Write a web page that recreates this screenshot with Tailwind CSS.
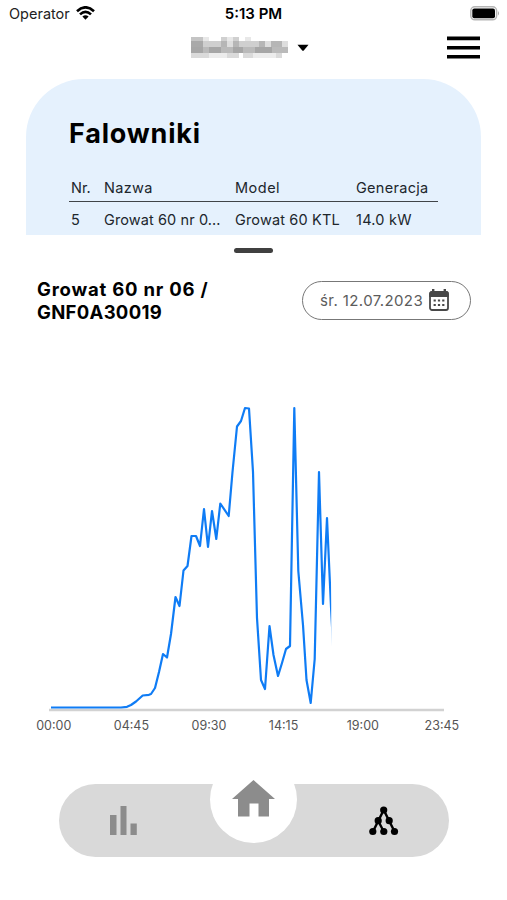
<!DOCTYPE html>
<html lang="pl">
<head>
<meta charset="utf-8">
<title>Falowniki</title>
<script src="https://cdn.jsdelivr.net/npm/@tailwindcss/browser@4"></script>
</head>
<body class="bg-white">
<div class="w-[507px] h-[900px] flex flex-col overflow-hidden bg-white font-['Inter',sans-serif] text-[#20262c]">
  <div class="h-7 shrink-0 grid grid-cols-3 items-center pl-[9px] pr-[7px] text-[14.5px] leading-7 text-[#222]">
    <div class="flex items-center gap-[6px]"><span>Operator</span>
      <svg class="w-[19px] h-[14px] mt-[-2px]" viewBox="0 0 19 14"><g fill="none" stroke="#000" stroke-width="2.6"><path d="M1 5.2Q9.5-2.6 18 5.2"/><path d="M4 8.4Q9.5 3.2 15 8.4"/></g><path d="M6.4 10.6Q9.5 8 12.6 10.6L9.5 13.8Z"/></svg>
    </div>
    <div class="text-center font-semibold text-[15px] text-black pr-[2px]">5:13 PM</div>
    <svg class="justify-self-end w-[30px] h-[15px] mt-[-2px]" viewBox="0 0 30 15"><rect x=".8" y=".8" width="25.8" height="13" rx="4" fill="#fff" stroke="#b5b5b5" stroke-width="1.5"/><rect x="2.3" y="2.5" width="22.7" height="9.7" rx="2"/><path d="M28 5q2 2.3 0 4.6z" fill="#aaa"/></svg>
  </div>
  <div class="h-[51px] shrink-0 flex pl-[191px] pt-[8px]">
    <svg class="w-[97px] h-[24px]" viewBox="0 0 97 24" shape-rendering="crispEdges">
      <path fill="#c4c4c4" d="M0 1h12v4H0z"/><path fill="#e8e8e8" d="M12 1h6v4h-6zM36 1h6v4h-6zM54 1h6v4h-6z"/><path fill="#d0d0d0" d="M30 1h6v4h-6zM42 1h6v4h-6z"/>
      <path fill="#a9a9a9" d="M0 5h12v6H0z"/><path fill="#cfcfcf" d="M12 5h18v6H12zM48 5h20v6H48z"/><path fill="#b6b6b6" d="M30 5h6v6h-6zM42 5h6v6h-6zM68 5h6v6h-6zM80 5h11v6H80z"/><path fill="#dedede" d="M36 5h6v6h-6zM74 5h6v6h-6zM91 5h6v6h-6z"/>
      <path fill="#a6a6a6" d="M0 11h12v6H0zM18 11h12v6H18zM42 11h10v6H42zM64 11h17v6H64z"/><path fill="#bababa" d="M12 11h6v6h-6zM30 11h12v6H30zM52 11h12v6H52zM81 11h16v6H81z"/>
      <path fill="#dadada" d="M0 17h18v5H0zM36 17h12v5H36zM52 17h10v5H52zM85 17h6v5h-6z"/><path fill="#ececec" d="M18 17h18v5H18zM62 17h23v5H62z"/>
    </svg>
    <svg class="ml-[9px] mt-[8px] w-[12px] h-[8px]" viewBox="0 0 12 8"><path d="M.5.8h11L7 6.2Q6 7.2 5 6.2Z"/></svg>
    <svg class="ml-[138px] w-[33px] h-[24px]" viewBox="0 0 33 24"><path d="M0 2.4h33M0 11.7h33M0 20.7h33" stroke="#000" stroke-width="3.6"/></svg>
  </div>
  <section class="h-[156px] shrink-0 mx-[26px] rounded-t-[58px] bg-[#e5f1fd] pl-[43px] pr-[43px] pt-[39px] overflow-hidden">
    <h1 class="text-[27px] leading-[32px] font-bold text-black tracking-[0.8px]">Falowniki</h1>
    <div class="mt-[26px] h-[26px] flex border-b border-[#404448] text-[14.5px] leading-[24px] pl-[2px] whitespace-nowrap">
      <div class="w-[33px]">Nr.</div><div class="w-[131px] tracking-[0.3px]">Nazwa</div><div class="w-[121px] tracking-[0.5px]">Model</div><div class="tracking-[0.3px]">Generacja</div>
    </div>
    <div class="mt-[6px] flex text-[14.5px] leading-[24px] pl-[2px] whitespace-nowrap">
      <div class="w-[33px]">5</div><div class="w-[131px] tracking-[0.1px]">Growat 60 nr 0...</div><div class="w-[121px] tracking-[0.15px]">Growat 60 KTL</div><div class="tracking-[0.25px]">14.0 kW</div>
    </div>
  </section>
  <div class="h-[46px] shrink-0 flex justify-center pt-[13px]"><div class="w-[39px] h-[4.5px] rounded-full bg-[#404040]"></div></div>
  <div class="h-[48px] shrink-0 flex justify-between pl-[37px] pr-[36px]">
    <h2 class="mt-[-3px] text-[18.5px] leading-[23px] font-bold text-black"><span class="tracking-[0.8px]">Growat 60 nr 06 /</span><br><span class="tracking-[0.3px]">GNF0A30019</span></h2>
    <div class="w-[169px] h-[39px] rounded-full border border-[#777] flex items-center pl-[17px] gap-[6px] text-[15px] text-[#5c5c5c] whitespace-nowrap">
      <span class="w-[103px] pt-[1px] tracking-[0.4px]">śr. 12.07.2023</span>
      <svg class="w-[20px] h-[22px] shrink-0 mt-[-1px]" viewBox="0 0 20 22"><rect x="1" y="3" width="18" height="18" rx="2" fill="none" stroke="#484848" stroke-width="1.8"/><path d="M.3 8V4.5Q.3 2 3 2h14q2.7 0 2.7 2.5V8zM3 0h2.4v3H3zM14.6 0H17v3h-2.4z" fill="#484848"/><path d="M4.6 11.5h2.2M8.9 11.5h2.2M13.2 11.5h2.2M4.6 16h2.2M8.9 16h2.2M13.2 16h2.2" stroke="#484848" stroke-width="2"/></svg>
    </div>
  </div>
  <svg class="h-[384px] w-[507px] shrink-0 block" viewBox="0 329 507 384">
    <defs><clipPath id="plot"><rect x="40" y="380" width="291.2" height="333"/></clipPath></defs>
    <path d="M49 710h395" stroke="#d2d2d2" stroke-width="2.4"/>
    <polyline clip-path="url(#plot)" fill="none" stroke="#0f7cf5" stroke-width="2.2" stroke-linejoin="round" points="51,707.5 121,707.5 127,706.8 131,705 136,701.5 142.7,695.5 149,694.8 151,694 155,688 159,672 163,654 167,657.5 171,634 175.5,597 179.5,606 183.5,570.5 187.5,566 191.5,536 196,536 200,546 204,509 208,547 212,511 216.3,539 220.3,503.5 228.7,516 232.5,472 237,426.5 241,421 245,408 249,408.5 253,472 257,618 261,680 265,689 269.5,626 273.5,655 278,676 282,663 286,649 290,646 294.3,408 298.3,571 303,625 306.5,680 310.7,703 314.7,659 319,472 323,604 327,518 331,607 335,682"/>
  </svg>
  <div class="h-[24px] shrink-0 flex pl-[15px] text-[12.5px] leading-[25px] text-[#555] text-center"><span class="w-[77.6px]">00:00</span><span class="w-[77.6px]">04:45</span><span class="w-[77.6px]">09:30</span><span class="w-[71.6px]">14:15</span><span class="w-[87px]">19:00</span><span class="w-[71px]">23:45</span></div>
  <nav class="relative mt-[47px] ml-[59px] w-[390px] h-[73px] shrink-0 rounded-full bg-[#d9d9d9]">
    <div class="absolute left-[151px] top-[-28px] w-[87px] h-[87px] rounded-full bg-white"></div>
    <svg class="absolute left-0 top-[-10px] w-[390px] h-[83px]" viewBox="59 774 390 83">
      <path fill="#8c8c8c" d="M110 815h6.5v20H110zM120.5 806h6v29h-6zM130.5 823.5h6.3V835h-6.3zM253.5 780L275 799h-6v17.5h-10.5v-13h-9v13H238V799h-6z"/>
      <path d="M373 831.5L383.7 810L394.5 831.5M378 820.5L383.7 831.5" fill="none" stroke="#000" stroke-width="2.4"/>
      <circle cx="383.7" cy="810" r="3.6"/><circle cx="378.2" cy="820.7" r="3.6"/><circle cx="389.2" cy="820.7" r="3.6"/><circle cx="372.8" cy="831.5" r="3.6"/><circle cx="383.8" cy="831.5" r="3.6"/><circle cx="394.5" cy="831.5" r="3.6"/>
    </svg>
  </nav>
</div>
</body>
</html>
